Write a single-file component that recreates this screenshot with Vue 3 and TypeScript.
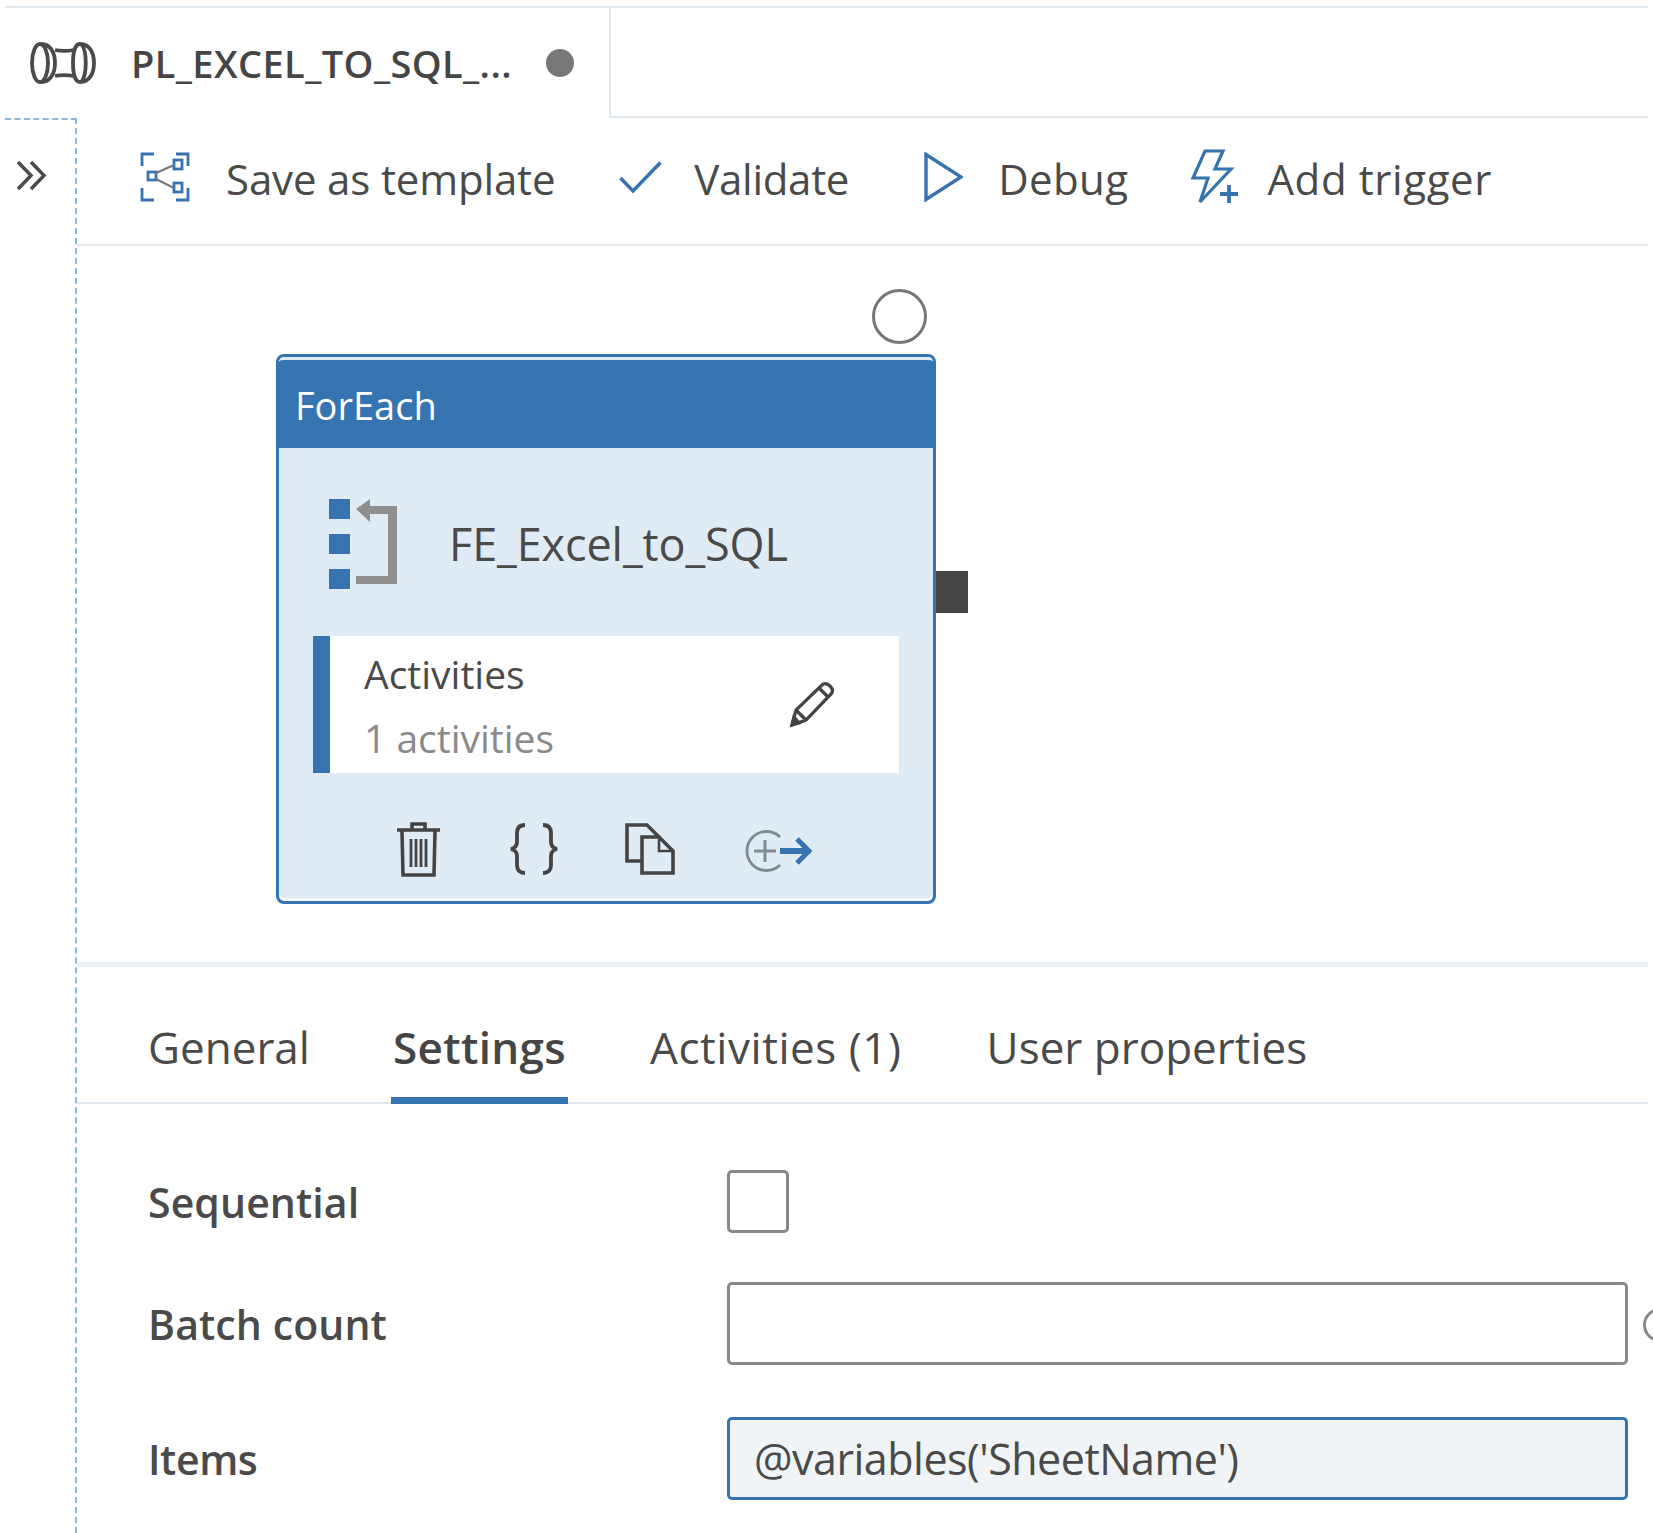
<template>
  <div class="page">
    <header class="tabbar">
      <div class="tab">
        <svg class="pipe-icon" width="66" height="44" viewBox="0 0 66 44" fill="none" stroke="#4a4a4a" stroke-width="3.8">
          <ellipse cx="10" cy="22" rx="8" ry="19" />
          <path d="M11 3C20 3 25 11 25 22C25 33 20 41 11 41" />
          <path d="M25 9C30 10 38 10 44 9M25 35C30 34 38 34 44 35" />
          <path d="M50 3C59 3 64 11 64 22C64 33 59 41 50 41C45 41 43 32 43 22C43 12 45 3 50 3Z" />
          <path d="M52 4C57 11 57 33 52 40" />
        </svg>
        <span class="tab-title">PL_EXCEL_TO_SQL_...</span>
        <span class="dirty-dot"></span>
      </div>
      <div class="tab-rest"></div>
    </header>

    <div class="workspace">
      <aside class="rail">
        <svg width="31" height="31" viewBox="0 0 31 31" fill="none" stroke="#4a4a4a" stroke-width="3.5">
          <path d="M2 2L15 15.5L2 29M15 2L28 15.5L15 29" />
        </svg>
      </aside>

      <main class="main">
        <nav class="toolbar">
          <div class="tool tool-save">
            <svg width="50" height="50" viewBox="0 0 50 50" fill="none" stroke="#3573b1" stroke-width="2.8">
              <path d="M14 2H2V14M36 2H48V14M2 36V48H14M48 36V48H36" />
              <rect x="8" y="20" width="8" height="8" />
              <rect x="34" y="8" width="8" height="9" />
              <rect x="34" y="31" width="8" height="9" />
              <path d="M16 21L34 13M16 27L34 36" stroke-width="2" stroke="#777" />
            </svg>
            <span>Save as template</span>
          </div>
          <div class="tool tool-validate">
            <svg width="43" height="32" viewBox="0 0 43 32" fill="none" stroke="#3573b1" stroke-width="3.4">
              <path d="M1.5 17L14 30L41.5 1.5" />
            </svg>
            <span>Validate</span>
          </div>
          <div class="tool tool-debug">
            <svg width="39" height="50" viewBox="0 0 39 50" fill="none" stroke="#3573b1" stroke-width="3.4">
              <path d="M2 2.5L37 25L2 47.5Z" />
            </svg>
            <span>Debug</span>
          </div>
          <div class="tool tool-trigger">
            <svg width="48" height="56" viewBox="0 0 48 56" fill="none" stroke="#3573b1" stroke-width="3.2">
              <path d="M14 2H32L24 20H40L9 53L17 29H2Z" />
              <path d="M38 36V54M29 45H47" stroke-width="3.8" />
            </svg>
            <span>Add trigger</span>
          </div>
        </nav>

        <section class="canvas">
          <article class="node">
            <span class="port-in"></span>
            <span class="port-out"></span>
            <div class="node-head">ForEach</div>
            <div class="node-body">
              <div class="node-title">
                <svg width="69" height="92" viewBox="0 0 69 92">
                  <rect x="0" y="2" width="21" height="20" fill="#3573b1" />
                  <rect x="0" y="37" width="21" height="20" fill="#3573b1" />
                  <rect x="0" y="72" width="21" height="20" fill="#3573b1" />
                  <path d="M27 12L41 2V9H68V87H27V79H59V17H41V25Z" fill="#8f8f8f" />
                </svg>
                <span>FE_Excel_to_SQL</span>
              </div>
              <div class="activities">
                <div class="activities-text">
                  <div class="act-label">Activities</div>
                  <div class="act-count">1 activities</div>
                </div>
                <svg width="46" height="46" viewBox="0 0 46 46" fill="none" stroke="#444" stroke-width="3.2">
                  <path d="M3 43L7 28L33 3C35 1 38 1 41 4C44 7 44 10 42 12L17 38Z" />
                  <path d="M7 28L17 38M30 6L39 15" />
                  <path d="M3 43L5 35L10 41Z" fill="#444" />
                </svg>
              </div>
              <div class="actions">
                <svg class="act-trash" width="45" height="56" viewBox="0 0 45 56" fill="none" stroke="#444" stroke-width="3.6">
                  <path d="M1 9H44M16 8V3H29V8M6 10L7 54H38L39 10" />
                  <path d="M15 18V46M20 18V46M25 18V46M30 18V46" stroke-width="2.8" />
                </svg>
                <svg class="act-code" width="50" height="52" viewBox="0 0 50 52" fill="none" stroke="#444" stroke-width="3.8">
                  <path d="M16 2C10 2 8 5 8 10V19C8 23 6 25 2 26C6 27 8 29 8 33V42C8 47 10 50 16 50" />
                  <path d="M34 2C40 2 42 5 42 10V19C42 23 44 25 48 26C44 27 42 29 42 33V42C42 47 40 50 34 50" />
                </svg>
                <svg class="act-copy" width="50" height="52" viewBox="0 0 50 52" fill="none" stroke="#444" stroke-width="3.6">
                  <path d="M17 38H2V2H22L34 14" />
                  <path d="M17 14H34L48 28V50H17Z" fill="#e0ecf5" />
                  <path d="M34 14V28H48" stroke-width="2.6" />
                </svg>
                <svg class="act-add" width="68" height="42" viewBox="0 0 68 42" fill="none" stroke="#7f8a94" stroke-width="2.8">
                  <path d="M36 7A19.5 19.5 0 1 0 36 35" />
                  <path d="M21 10V32M10 21H32" stroke-width="3" />
                  <path d="M36 21H62" stroke="#3573b1" stroke-width="6" />
                  <path d="M53 9L65 21L53 33" stroke="#3573b1" stroke-width="5" />
                </svg>
              </div>
            </div>
          </article>
        </section>

        <div class="tabs">
          <span class="pane-tab tab-first">General</span>
          <span class="pane-tab active">Settings</span>
          <span class="pane-tab tab-wide">Activities (1)</span>
          <span class="pane-tab">User properties</span>
        </div>

        <form class="settings">
          <div class="row row-seq">
            <label>Sequential</label>
            <span class="checkbox"></span>
          </div>
          <div class="row row-batch">
            <label>Batch count</label>
            <span class="field"></span>
            <span class="info"></span>
          </div>
          <div class="row row-items">
            <label>Items</label>
            <span class="field field-active">@variables('SheetName')</span>
          </div>
        </form>
      </main>
    </div>
  </div>
</template>

<script setup lang="ts">
</script>

<style>
html,
body {
  margin: 0;
  background: #fff;
}
</style>

<style scoped>
.page {
  width: 1653px;
  height: 1533px;
  overflow: hidden;
  background: #fff;
  color: #4a4a4a;
  font-family: "Open Sans", "Noto Sans", sans-serif;
}

.tabbar {
  display: flex;
  height: 110px;
  margin: 6px 5px 0;
  border-top: 2px solid #e2eaef;
}

.tab {
  width: 606px;
  flex: none;
  display: flex;
  align-items: center;
  border-right: 2px solid #dfe7ec;
  box-sizing: border-box;
  padding: 0 0 0 25px;
}

.tab-title {
  margin-left: 35px;
  font-size: 38px;
  font-weight: 600;
  letter-spacing: 0.4px;
  color: #454545;
  white-space: nowrap;
}

.dirty-dot {
  width: 28px;
  height: 28px;
  margin-left: 34px;
  border-radius: 50%;
  background: #787878;
}

.tab-rest {
  flex: 1;
  border-bottom: 2px solid #dfe7ec;
}

.workspace {
  display: flex;
  height: 1415px;
}

.rail {
  width: 72px;
  margin-left: 5px;
  flex: none;
  box-sizing: border-box;
  border-top: 2px dashed #8fb8d6;
  border-right: 2px dashed #8fb8d6;
  padding: 40px 0 0 11px;
}

.main {
  flex: 1;
  min-width: 0;
  margin-right: 5px;
}

.toolbar {
  height: 128px;
  box-sizing: border-box;
  display: flex;
  align-items: center;
  padding: 0 0 5px 63px;
  border-bottom: 2px solid #e2eaef;
  font-size: 42px;
  white-space: nowrap;
}

.tool {
  display: flex;
  align-items: center;
  flex: none;
}

.tool svg {
  margin-bottom: 3px;
}

.tool-save {
  letter-spacing: -0.15px;
}

.tool-save span {
  margin-left: 36px;
}

.tool-validate {
  margin-left: 64px;
  letter-spacing: -0.3px;
}

.tool-validate span {
  margin-left: 32px;
}

.tool-debug {
  margin-left: 75px;
  letter-spacing: 0.4px;
}

.tool-debug span {
  margin-left: 35px;
}

.tool-trigger {
  margin-left: 63px;
  letter-spacing: 0.6px;
}

.tool-trigger span {
  margin-left: 28px;
}

.canvas {
  height: 721px;
  box-sizing: border-box;
  padding: 108px 0 0 199px;
  border-bottom: 5px solid #edf1f4;
}

.node {
  position: relative;
  width: 660px;
  height: 550px;
  box-sizing: border-box;
  display: flex;
  flex-direction: column;
  border: 3px solid #3573b1;
  border-radius: 8px;
  background: #e0ecf5;
  box-shadow: inset 0 -3px 0 #f4f8fb;
}

.port-in {
  position: absolute;
  top: -68px;
  right: 6px;
  width: 49px;
  height: 49px;
  border: 3px solid #777;
  border-radius: 50%;
  background: #fff;
}

.port-out {
  position: absolute;
  top: 214px;
  right: -35px;
  width: 32px;
  height: 42px;
  background: #444;
}

.node-head {
  height: 91px;
  box-sizing: border-box;
  padding: 1px 0 0 16px;
  border-top: 3px solid #e0ecf5;
  border-radius: 5px 5px 0 0;
  display: flex;
  align-items: center;
  background: #3573b1;
  color: #fff;
  font-size: 38px;
}

.node-body {
  flex: 1;
  display: flex;
  flex-direction: column;
  padding: 49px 34px 0;
}

.node-title {
  display: flex;
  align-items: center;
  padding-left: 16px;
  font-size: 45px;
  letter-spacing: -0.1px;
}

.node-title span {
  margin-left: 51px;
}

.activities {
  margin-top: 47px;
  height: 137px;
  box-sizing: border-box;
  display: flex;
  align-items: center;
  justify-content: space-between;
  padding: 0 64px 0 34px;
  background: #fff;
  border-left: 17px solid #3573b1;
}

.activities-text {
  margin-top: 2px;
}

.act-label {
  font-size: 39px;
  line-height: 50px;
}

.act-count {
  margin-top: 14px;
  font-size: 39px;
  line-height: 50px;
  color: #8a8a8a;
}

.actions {
  display: flex;
  align-items: center;
  margin-top: 48px;
  padding-left: 83px;
}

.act-code {
  margin-left: 68px;
}

.act-copy {
  margin-left: 66px;
}

.act-add {
  margin: 3px 0 0 69px;
}

.tabs {
  height: 137px;
  box-sizing: border-box;
  display: flex;
  align-items: flex-start;
  padding: 50px 0 0 71px;
  border-bottom: 2px solid #dfe7ec;
  font-size: 44px;
  line-height: 60px;
}

.pane-tab {
  position: relative;
  margin-right: 84px;
  white-space: nowrap;
}

.pane-tab.tab-first {
  margin-right: 83px;
}

.pane-tab.tab-wide {
  margin-right: 85px;
  letter-spacing: 0.55px;
}

.pane-tab.active {
  font-weight: 600;
  letter-spacing: 0.35px;
  color: #454545;
}

.pane-tab.active::after {
  content: "";
  position: absolute;
  left: -2px;
  right: -2px;
  top: 80px;
  height: 7px;
  background: #3573b1;
}

.settings {
  padding: 66px 20px 0 71px;
}

.row {
  display: flex;
  align-items: center;
  position: relative;
}

.row label {
  width: 579px;
  flex: none;
  font-size: 41px;
  font-weight: 600;
  letter-spacing: 0.1px;
  color: #4a4a4a;
}

.row-batch {
  margin-top: 49px;
}

.row-items {
  margin-top: 52px;
}

.row-items label {
  letter-spacing: -0.4px;
}

.checkbox {
  width: 62px;
  height: 63px;
  box-sizing: border-box;
  border: 3px solid #888;
  border-radius: 5px;
}

.field {
  flex: 1;
  height: 83px;
  box-sizing: border-box;
  display: flex;
  align-items: center;
  padding-left: 24px;
  border: 3px solid #8a8a8a;
  border-radius: 5px;
  font-size: 43px;
  letter-spacing: -0.5px;
  white-space: nowrap;
}

.field-active {
  border-color: #3573b1;
  background: #f0f4f6;
}

.info {
  position: absolute;
  right: -49px;
  top: 26px;
  width: 28px;
  height: 28px;
  border: 3px solid #888;
  border-radius: 50%;
}
</style>
